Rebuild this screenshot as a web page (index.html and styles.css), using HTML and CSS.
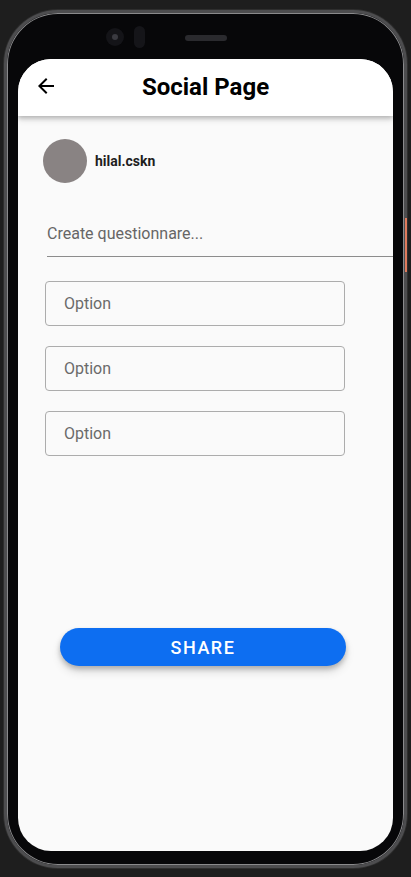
FILE: index.html
```html
<!DOCTYPE html>
<html lang="en">
<head>
<meta charset="utf-8">
<title>Social Page</title>
<link rel="stylesheet" href="styles.css">
</head>
<body>
<div class="phone">
  <span class="side-button"></span>
  <div class="bezel-top">
    <span class="camera"><span class="lens"></span></span>
    <span class="sensor"></span>
    <span class="speaker"></span>
  </div>
  <div class="screen">
    <header class="appbar">
      <button class="back" aria-label="Back">
        <svg width="24" height="24" viewBox="0 0 24 24"><path d="M20 11H7.83l5.59-5.59L12 4l-8 8 8 8 1.41-1.41L7.83 13H20v-2z" fill="#000"/></svg>
      </button>
      <h1 class="title">Social Page</h1>
      <span class="spacer"></span>
    </header>
    <main class="content">
      <div class="profile">
        <span class="avatar"></span>
        <span class="username">hilal.cskn</span>
      </div>
      <div class="question">Create questionnare...</div>
      <div class="options">
        <div class="option">Option</div>
        <div class="option">Option</div>
        <div class="option">Option</div>
      </div>
      <button class="share">SHARE</button>
    </main>
  </div>
</div>
</body>
</html>
```

FILE: styles.css
```css
* { box-sizing: border-box; }
html, body { margin: 0; padding: 0; }
body {
  width: 411px;
  height: 877px;
  background: #1e1e1e;
  font-family: Roboto, "Liberation Sans", sans-serif;
  overflow: hidden;
  padding: 10px 0 0 4px;
}
.phone {
  position: relative;
  width: 403px;
  height: 858px;
  border-radius: 54px;
  background: #070709;
  border: 3px solid #4d4d4f;
  box-shadow: inset 0 0 0 1px #8a8a8c, 0 0 0 1px #2e2e2e;
  display: flex;
  flex-direction: column;
  padding: 0 11px 14px 11px;
}
.side-button {
  position: absolute;
  right: -3px;
  top: 205px;
  width: 2px;
  height: 54px;
  background: #e07a5c;
}
.bezel-top {
  height: 46px;
  display: flex;
  align-items: center;
  padding-left: 88px;
  padding-top: 12px;
  align-items: flex-start;
}
.camera {
  width: 18px;
  height: 18px;
  border-radius: 50%;
  background: #141418;
  display: flex;
  align-items: center;
  justify-content: center;
  margin-top: 3px;
}
.lens {
  width: 6px;
  height: 6px;
  border-radius: 50%;
  background: #3a3a40;
}
.sensor {
  width: 11px;
  height: 22px;
  border-radius: 6px;
  background: #151519;
  margin-left: 10px;
  margin-top: 1px;
}
.speaker {
  width: 42px;
  height: 6px;
  border-radius: 3px;
  background: #2a2a2e;
  margin-left: 40px;
  margin-top: 10px;
}
.screen {
  width: 375px;
  height: 792px;
  border-radius: 33px;
  background: #fafafa;
  overflow: hidden;
  display: flex;
  flex-direction: column;
}
.appbar {
  position: relative;
  z-index: 1;
  height: 57px;
  flex: none;
  background: #fff;
  display: grid;
  grid-template-columns: 56px 1fr 56px;
  align-items: center;
  box-shadow: 0 2px 4px rgba(0,0,0,0.18), 0 4px 6px rgba(0,0,0,0.12);
}
.back {
  border: 0;
  background: none;
  padding: 0;
  width: 56px;
  height: 56px;
  display: flex;
  align-items: center;
  justify-content: center;
  margin-top: -3px;
}
.title {
  margin: 0;
  text-align: center;
  font-size: 24px;
  font-weight: 700;
  color: #000;
  margin-top: -2px;
}
.content {
  display: flex;
  flex-direction: column;
}
.profile {
  display: flex;
  align-items: center;
  gap: 8px;
  margin: 23px 0 0 25px;
}
.avatar {
  width: 44px;
  height: 44px;
  border-radius: 50%;
  background: #898383;
}
.username {
  font-size: 14px;
  font-weight: 700;
  color: #1e1e1e;
}
.question {
  margin: 27px 0 0 29px;
  height: 47px;
  border-bottom: 1px solid #8c8c8c;
  display: flex;
  align-items: center;
  font-size: 16px;
  color: #666;
  padding-top: 1px;
}
.options {
  display: flex;
  flex-direction: column;
  gap: 20px;
  margin: 24px 0 0 27px;
}
.option {
  width: 300px;
  height: 45px;
  border: 1px solid #acacac;
  border-radius: 4px;
  display: flex;
  align-items: center;
  padding-left: 18px;
  font-size: 16px;
  color: #6a6a6a;
}
.share {
  margin: 172px 0 0 42px;
  width: 286px;
  height: 38px;
  border: 0;
  border-radius: 19px;
  background: #0d6ef1;
  color: #fff;
  font-family: Roboto, "Liberation Sans", sans-serif;
  font-size: 18px;
  font-weight: 500;
  letter-spacing: 1.5px;
  box-shadow: 0 3px 5px rgba(0,0,0,0.22), 0 6px 10px rgba(0,0,0,0.12);
}
```
